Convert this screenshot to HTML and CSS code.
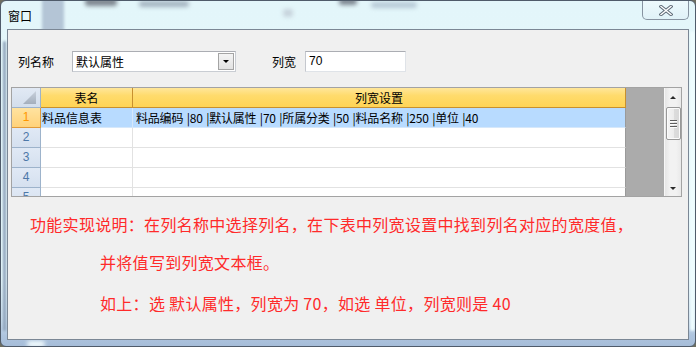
FILE: index.html
```html
<!DOCTYPE html>
<html lang="zh-CN">
<head>
<meta charset="utf-8">
<title>窗口</title>
<link rel="stylesheet" href="styles.css">
</head>
<body>
<div class="window">
  <div class="glass">
    <span class="blob b1"></span>
    <span class="blob b2"></span>
    <span class="blob b3"></span>
    <span class="blob b4"></span>
    <span class="blob b5"></span>
    <span class="blob b6"></span>
    <span class="blob b7"></span>
    <span class="blob b8"></span>
    <span class="blob b9"></span>
  </div>
  <div class="titlebar">
    <span class="title">窗口</span>
    <div class="close">
      <svg width="14" height="11" viewBox="0 0 14 11">
        <path d="M2 1.5 L12 9.5 M12 1.5 L2 9.5" stroke="#5f6b78" stroke-width="3.4" stroke-linecap="square" fill="none"/>
        <path d="M2 1.5 L12 9.5 M12 1.5 L2 9.5" stroke="#ffffff" stroke-width="1.4" stroke-linecap="square" fill="none"/>
      </svg>
    </div>
  </div>
  <div class="client">
    <div class="toolbar">
      <span class="lbl">列名称</span>
      <div class="combo">
        <span class="combo-text">默认属性</span>
        <span class="drop"><span class="tri-down"></span></span>
      </div>
      <span class="lbl lbl2">列宽</span>
      <div class="textbox">70</div>
    </div>
    <div class="grid">
      <div class="table">
        <div class="row head">
          <div class="cell c0 corner"><span class="corner-tri"></span></div>
          <div class="cell c1">表名</div>
          <div class="cell c2">列宽设置</div>
        </div>
        <div class="row sel">
          <div class="cell c0 rh">1</div>
          <div class="cell c1">料品信息表</div>
          <div class="cell c2 spec">料品编码 |80 |默认属性 |70 |所属分类 |50 |料品名称 |250 |单位 |40</div>
        </div>
        <div class="row">
          <div class="cell c0 rh">2</div>
          <div class="cell c1"></div>
          <div class="cell c2"></div>
        </div>
        <div class="row">
          <div class="cell c0 rh">3</div>
          <div class="cell c1"></div>
          <div class="cell c2"></div>
        </div>
        <div class="row">
          <div class="cell c0 rh">4</div>
          <div class="cell c1"></div>
          <div class="cell c2"></div>
        </div>
        <div class="row">
          <div class="cell c0 rh">5</div>
          <div class="cell c1"></div>
          <div class="cell c2"></div>
        </div>
      </div>
      <div class="empty"></div>
      <div class="vscroll">
        <div class="sbtn"><span class="tri-up"></span></div>
        <div class="thumb"><span class="grip"></span><span class="grip"></span><span class="grip"></span></div>
        <div class="sbtn sbtn-down"><span class="tri-down small"></span></div>
      </div>
    </div>
    <div class="notes">
      <p class="note n1">功能实现说明：在列名称中选择列名，在下表中列宽设置中找到列名对应的宽度值，</p>
      <p class="note n2">并将值写到列宽文本框。</p>
      <p class="note n3">如上：选 默认属性，列宽为 70，如选 单位，列宽则是 40</p>
    </div>
  </div>
</div>
</body>
</html>
```
FILE: styles.css
```css
* { box-sizing: border-box; }
html, body { margin: 0; padding: 0; }
body {
  width: 696px;
  height: 347px;
  overflow: hidden;
  background: #6d6d60;
  font-family: "Noto Sans CJK SC", "Noto Sans", sans-serif;
  font-size: 12px;
  color: #000;
}

.window {
  position: relative;
  width: 696px;
  height: 347px;
  border: 1px solid #4f5b6a;
  border-radius: 6px;
  overflow: hidden;
  background: linear-gradient(to bottom, #e3f6fa 0%, #e5f7fb 80%, #c9dcec 92%, #aec4de 97%, #a6bdd9 100%);
}

/* blurred aero glass background */
.glass { position: absolute; left: 0; top: 0; width: 696px; height: 347px; }
.blob { position: absolute; display: block; filter: blur(2px); border-radius: 3px; }
.b1 { left: 41px; top: -4px; width: 22px; height: 36px; background: #b4c5d6; filter: blur(1.5px); }
.b2 { left: 84px; top: -3px; width: 32px; height: 8px; background: #7f8790; }
.b3 { left: 138px; top: 0px; width: 50px; height: 6px; background: #a4b3c0; }
.b4 { left: 282px; top: 8px; width: 10px; height: 8px; background: #c7d3dc; }
.b5 { left: 338px; top: -3px; width: 18px; height: 7px; background: #7d8690; }
.b6 { left: 370px; top: 1px; width: 46px; height: 6px; background: #b7c9d6; }
.b7 { left: 2px; top: 40px; width: 3px; height: 290px; background: #90a4bb; filter: blur(1px); }
.b8 { left: 26px; top: 340px; width: 18px; height: 6px; background: #f4fdff; }
.b9 { left: 689px; top: 30px; width: 5px; height: 300px; background: #eefcfe; filter: blur(1px); }

.titlebar {
  position: relative;
  height: 28px;
  display: flex;
  justify-content: space-between;
  align-items: flex-start;
}
.title {
  padding: 7px 0 0 7px;
  line-height: 16px;
  font-size: 12px;
}
.close {
  width: 47px;
  height: 20px;
  margin-top: -1px;
  margin-right: 6px;
  border: 1px solid #8793a1;
  border-top: none;
  border-radius: 0 0 5px 5px;
  background: linear-gradient(to bottom, #eefafd, #e0f2f8);
  display: flex;
  align-items: center;
  justify-content: center;
  padding-top: 1px;
}

.client {
  position: relative;
  margin-left: 6px;
  width: 682px;
  height: 311px;
  border: 1px solid #7b8795;
  background: #f0f0f0;
}

.toolbar {
  display: flex;
  align-items: center;
  height: 42px;
  padding: 21px 0 0 10px;
}
.lbl { line-height: 16px; white-space: nowrap; }
.lbl2 { margin-left: 36px; }

.combo {
  margin-left: 18px;
  width: 164px;
  height: 21px;
  background: #fff;
  border: 1px solid #c9cdd3;
  border-top-color: #abadb3;
  border-left-color: #b5b8be;
  display: flex;
  align-items: center;
  justify-content: space-between;
  padding: 0 1px 0 3px;
}
.combo-text { line-height: 16px; }
.drop {
  width: 16px;
  height: 17px;
  border: 1px solid #a4a4a4;
  background: linear-gradient(to bottom, #f4f4f4, #e2e2e2);
  display: flex;
  align-items: center;
  justify-content: center;
}
.tri-down {
  width: 0; height: 0;
  border-left: 3px solid transparent;
  border-right: 3px solid transparent;
  border-top: 3px solid #000;
}
.tri-down.small { border-top-color: #2a2a2a; border-left-width: 3.5px; border-right-width: 3.5px; }
.tri-up {
  width: 0; height: 0;
  border-left: 3.5px solid transparent;
  border-right: 3.5px solid transparent;
  border-bottom: 3px solid #2a2a2a;
}

.textbox {
  margin-left: 9px;
  width: 101px;
  height: 21px;
  background: #fff;
  border: 1px solid #dfe3e8;
  border-top-color: #abadb3;
  border-left-color: #c5c8ce;
  padding: 0 0 0 3px;
  line-height: 19px;
  font-family: "Liberation Sans", "Noto Sans CJK SC", sans-serif;
  font-size: 12px;
}

/* grid */
.grid {
  margin: 15px 0 0 3px;
  width: 671px;
  height: 110px;
  border: 1px solid #a3a3a3;
  display: flex;
  background: #fff;
}
.table {
  width: 614px;
  height: 108px;
  overflow: hidden;
  display: flex;
  flex-direction: column;
}
.row { display: flex; height: 20px; flex-shrink: 0; }
.cell {
  height: 20px;
  border-right: 1px solid #e2e2e2;
  border-bottom: 1px solid #e2e2e2;
  line-height: 19px;
  white-space: nowrap;
  overflow: hidden;
}
.c0 { width: 29px; }
.c1 { width: 92px; padding-left: 1px; }
.c2 { width: 493px; padding-left: 3px; border-right-color: #9a9a9a; }
.spec { word-spacing: 1px; letter-spacing: -0.2px; }

.head .cell {
  background: linear-gradient(to bottom, #ffe69a 0%, #ffdb6c 40%, #ffd456 100%);
  border-right-color: #c8902e;
  border-bottom-color: #c8902e;
  text-align: center;
  padding-left: 0;
}
.head .corner {
  position: relative;
  background: linear-gradient(to bottom, #e1e9f4, #d3deec);
  border-right-color: #9db3cb;
  border-bottom-color: #9db3cb;
}
.corner-tri {
  position: absolute;
  right: 4px;
  bottom: 3px;
  width: 13px;
  height: 13px;
  background: linear-gradient(to bottom, #c9d1dc, #a4afbd);
  clip-path: polygon(100% 0, 100% 100%, 0 100%);
}

.rh {
  background: linear-gradient(to bottom, #e0e9f5, #d5e0ef);
  border-right-color: #9db3cb;
  border-bottom-color: #9db3cb;
  text-align: center;
  color: #4d78a8;
  font-family: "Liberation Sans", "DejaVu Sans", sans-serif;
  font-size: 12px;
  line-height: 19px;
}
.sel .rh {
  background: linear-gradient(to bottom, #ffe3a0, #ffd27a);
  border-right-color: #e09a3a;
  border-bottom-color: #e09a3a;
  color: #ff9600;
}
.sel .c1, .sel .c2 {
  background: #b8dbff;
  border-bottom-color: #d6e8fb;
}
.sel .c1 { border-right-color: #d6e8fb; }
.sel .c2 { border-right-color: #9a9a9a; }

.empty { flex: 1; background: #ababab; }

.vscroll {
  width: 17px;
  height: 108px;
  overflow: hidden;
  background: linear-gradient(to right, #e6e6e6, #f2f2f2 30%, #f2f2f2 70%, #e9e9e9);
  border-left: 1px solid #f7f7f7;
  display: flex;
  flex-direction: column;
  align-items: center;
}
.sbtn {
  width: 16px;
  height: 18px;
  flex-shrink: 0;
  display: flex;
  align-items: center;
  justify-content: center;
}
.sbtn-down { margin-top: auto; height: 16px; padding-top: 1px; }
.thumb {
  margin-top: 1px;
  width: 15px;
  height: 33px;
  flex-shrink: 0;
  border: 1px solid #989898;
  border-radius: 2px;
  background: linear-gradient(to right, #f5f5f5, #ececec 50%, #dcdcdc 51%, #d8d8d8);
  box-shadow: inset 0 0 0 1px #fbfbfb;
  display: flex;
  flex-direction: column;
  align-items: center;
  justify-content: center;
  gap: 1px;
}
.grip {
  display: block;
  width: 7px;
  height: 2px;
  border-top: 1px solid #5f5f5f;
  border-bottom: 1px solid #fdfdfd;
}

/* notes */
.notes {
  padding-left: 22px;
  color: #ff2a2a;
  font-size: 16px;
  line-height: 20px;
  letter-spacing: 0.3px;
}
.note { margin: 0; white-space: nowrap; }
.notes .n1 { margin-top: 17px; }
.notes .n2 { margin: 18px 0 0 70px; }
.notes .n3 { margin: 21px 0 0 70px; }
```
